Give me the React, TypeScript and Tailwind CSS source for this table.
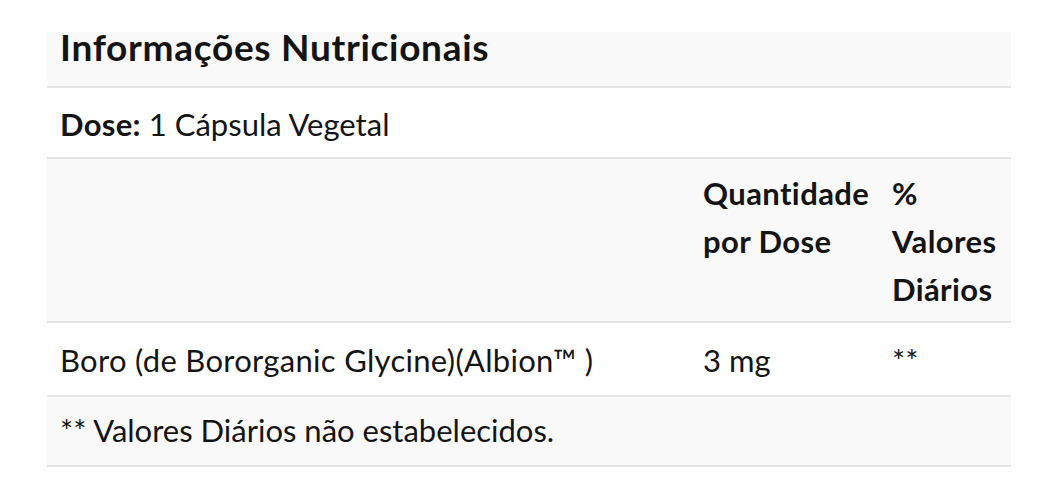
import React from "react";

const rows = [
    { name: "Boro (de Bororganic Glycine)(Albion™ )", amount: "3 mg", dv: "**" },
];

export default function App() {
    return (
        <div className="min-h-[500px] w-full bg-white pt-8 font-['Lato',sans-serif] text-[#141414]">
            <table className="ml-[47px] w-[964px] table-fixed border-collapse text-left text-[31px]">
                <colgroup>
                    <col className="w-[643px]" />
                    <col className="w-[189px]" />
                    <col className="w-[132px]" />
                </colgroup>
                <thead>
                    <tr className="border-b-2 border-[#e5e5e5] bg-[#f9f9f9]">
                        <th colSpan={3} className="px-[13px] pt-0 pb-[24px] text-[37px] font-bold leading-[30px] tracking-[0.7px]">
                            Informações Nutricionais
                        </th>
                    </tr>
                    <tr className="border-b-2 border-[#e5e5e5] bg-white">
                        <td colSpan={3} className="px-[13px] pt-[12px] pb-[9px] leading-[48px]">
                            <span className="font-bold tracking-[0.3px]">Dose:</span> 1 Cápsula Vegetal
                        </td>
                    </tr>
                    <tr className="border-b-2 border-[#e5e5e5] bg-[#f9f9f9] align-top">
                        <th className="px-[13px] pt-[10px] pb-[8px]"></th>
                        <th className="pl-[13px] pr-[6px] pt-[10px] pb-[8px] font-bold leading-[48px] tracking-[0.4px]">Quantidade por Dose</th>
                        <th className="pl-[13px] pr-[6px] pt-[10px] pb-[8px] font-bold leading-[48px] tracking-[0.4px]">% Valores Diários</th>
                    </tr>
                </thead>
                <tbody>
                    {rows.map((r) => (
                        <tr key={r.name} className="border-b-2 border-[#e5e5e5] bg-white align-top">
                            <td className="px-[13px] pt-[13px] pb-[11px] leading-[48px] tracking-[0.3px]">{r.name}</td>
                            <td className="pl-[13px] pr-[6px] pt-[13px] pb-[11px] leading-[48px]">{r.amount}</td>
                            <td className="pl-[13px] pr-[6px] pt-[13px] pb-[11px] leading-[48px]">{r.dv}</td>
                        </tr>
                    ))}
                    <tr className="border-b-2 border-[#e5e5e5] bg-[#f9f9f9]">
                        <td colSpan={3} className="px-[13px] pt-[9px] pb-[11px] leading-[48px]">
                            ** Valores Diários não estabelecidos.
                        </td>
                    </tr>
                </tbody>
            </table>
        </div>
    );
}
